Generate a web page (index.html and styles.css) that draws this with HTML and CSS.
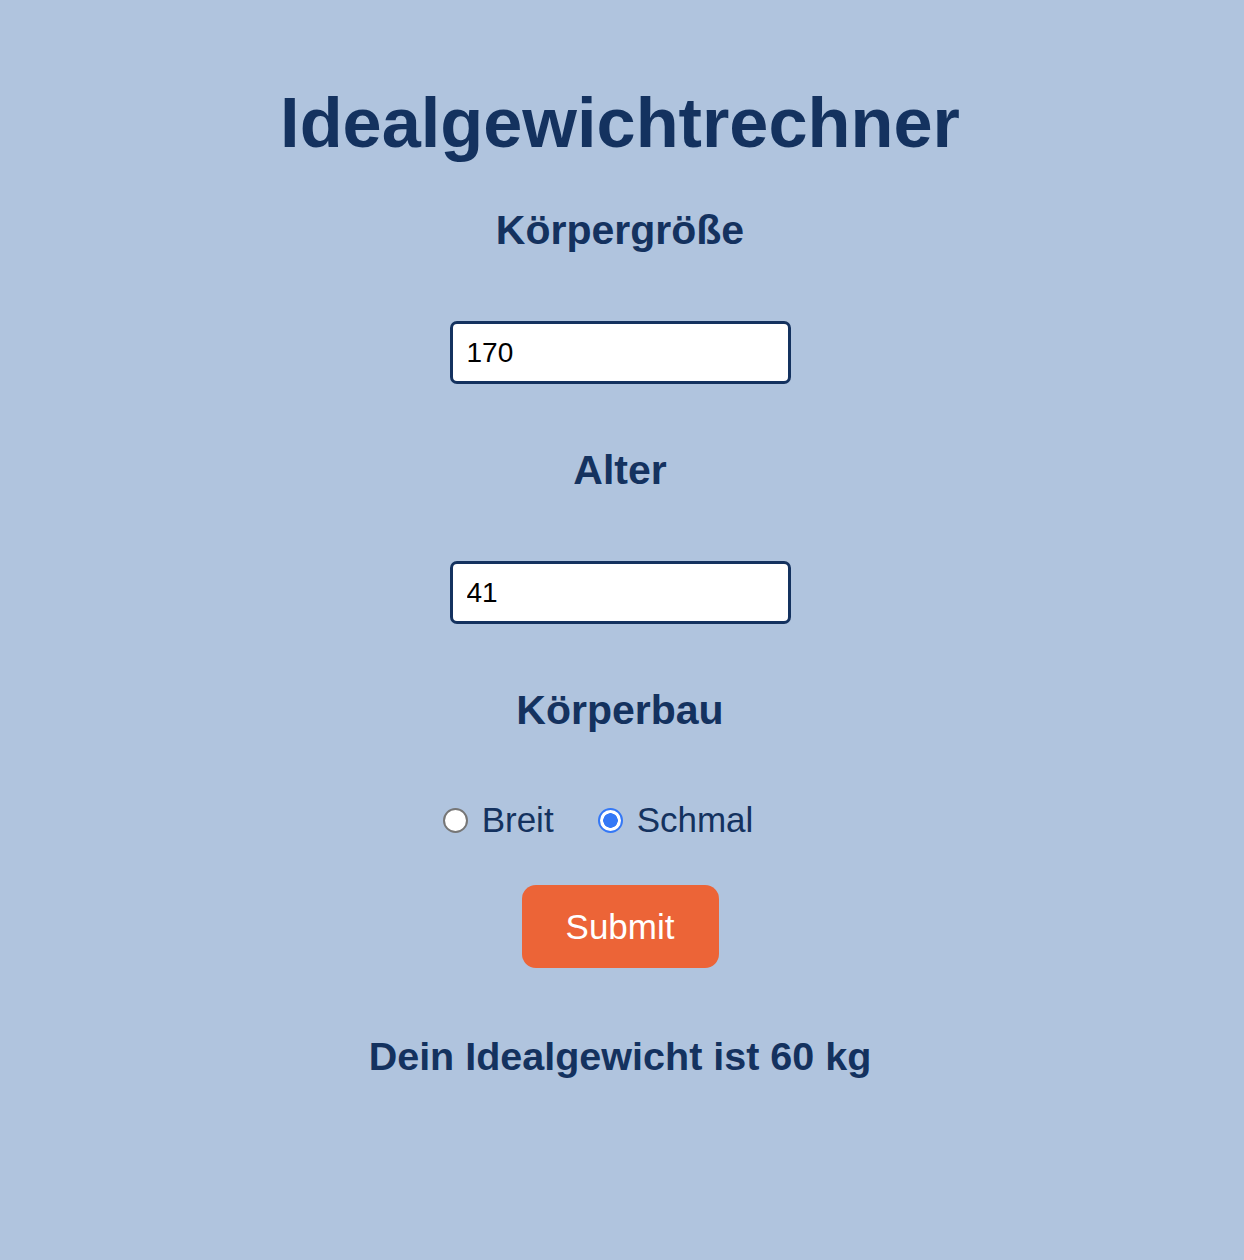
FILE: index.html
```html
<!DOCTYPE html>
<html lang="de">
<head>
<meta charset="utf-8">
<title>Idealgewichtrechner</title>
<link rel="stylesheet" href="styles.css">
</head>
<body>
<main class="calc">
  <h1 class="title">Idealgewichtrechner</h1>
  <form class="form">
    <label class="field-label" for="height">Körpergröße</label>
    <input class="field-input" id="height" type="text" value="170">
    <label class="field-label" for="age">Alter</label>
    <input class="field-input" id="age" type="text" value="41">
    <div class="field-label">Körperbau</div>
    <div class="radio-row">
      <label class="radio-option"><input class="radio" type="radio" name="build" value="breit"><span>Breit</span></label>
      <label class="radio-option"><input class="radio" type="radio" name="build" value="schmal" checked><span>Schmal</span></label>
    </div>
    <button class="submit" type="button">Submit</button>
  </form>
  <p class="result">Dein Idealgewicht ist 60 kg</p>
</main>
</body>
</html>
```
FILE: styles.css
```css
html, body {
  margin: 0;
  padding: 0;
}
body {
  background: #b0c4de;
  font-family: "Liberation Sans", Arial, Helvetica, sans-serif;
  color: #14325f;
  min-height: 1260px;
}
.calc {
  display: flex;
  flex-direction: column;
  align-items: center;
  padding-right: 4px;
}
.title {
  margin: 83px 0 0;
  font-size: 70.3px;
  line-height: 80px;
  font-weight: bold;
}
.form {
  display: flex;
  flex-direction: column;
  align-items: center;
}
.field-label {
  display: block;
  font-size: 41px;
  line-height: 48px;
  font-weight: bold;
  margin-top: 62px;
}
.title + .form .field-label:first-child {
  margin-top: 43px;
}
.field-input {
  box-sizing: border-box;
  margin-top: 67px;
  width: 341px;
  height: 63px;
  border: 3px solid #14325f;
  border-radius: 7px;
  background: #fff;
  padding: 0 14px;
  font-family: "Liberation Sans", Arial, sans-serif;
  font-size: 28px;
  color: #000;
  outline: none;
}
.radio-row {
  margin-top: 66px;
  display: flex;
  align-items: center;
  height: 40px;
}
.radio-option {
  display: flex;
  align-items: center;
  gap: 14px;
  margin-right: 44px;
  font-size: 35px;
  line-height: 40px;
  color: #14325f;
}
.radio {
  appearance: none;
  -webkit-appearance: none;
  margin: 0;
  width: 25px;
  height: 25px;
  box-sizing: border-box;
  border: 2px solid #767676;
  border-radius: 50%;
  background: #fff;
}
.radio:checked {
  border: 2px solid #3478f6;
  background: radial-gradient(circle, #3478f6 0 7px, #fff 7.5px);
}
.submit {
  margin-top: 45px;
  width: 197px;
  height: 83px;
  border: none;
  border-radius: 14px;
  background: #ec6437;
  color: #fff;
  font-family: "Liberation Sans", Arial, sans-serif;
  font-size: 35px;
  cursor: pointer;
}
.result {
  margin: 64px 0 0;
  font-size: 39.5px;
  line-height: 48px;
  font-weight: bold;
}
```
